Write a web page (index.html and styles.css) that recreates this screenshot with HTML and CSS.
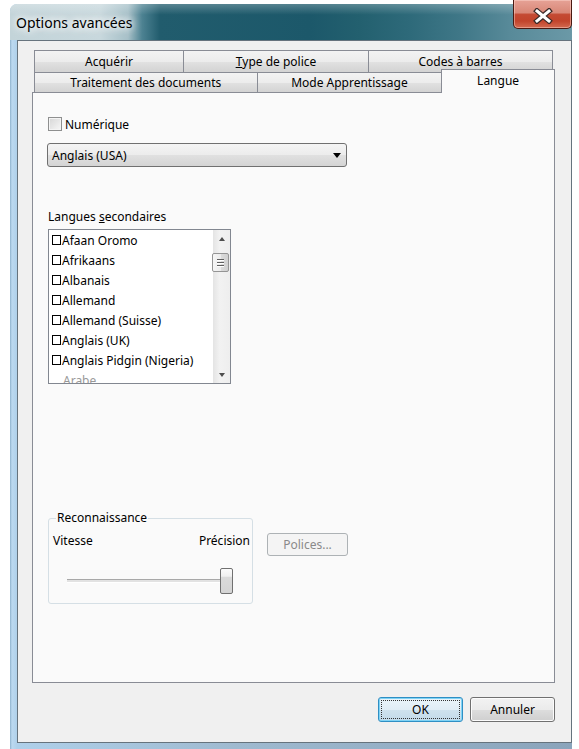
FILE: index.html
```html
<!DOCTYPE html>
<html lang="fr">
<head>
<meta charset="utf-8">
<title>Options avancées</title>
<link rel="stylesheet" href="styles.css">
</head>
<body>
<div class="window">
    <div class="titlebar">
        <span class="title">Options avancées</span>
        <div class="close-btn">
            <svg width="20" height="16" viewBox="0 0 20 16">
                <path d="M4 3 L16 13 M16 3 L4 13" stroke="#3a2a28" stroke-width="5.5" stroke-linecap="square" fill="none"/>
                <path d="M4 3 L16 13 M16 3 L4 13" stroke="#ffffff" stroke-width="3" stroke-linecap="square" fill="none"/>
            </svg>
        </div>
    </div>
    <div class="client">
        <div class="tab-control">
            <div class="tab-row tab-row-back">
                <div class="tab tab-acquerir">Acquérir</div>
                <div class="tab tab-police"><u>T</u>ype de police</div>
                <div class="tab tab-codes">Codes à barres</div>
            </div>
            <div class="tab-row tab-row-front">
                <div class="tab tab-traitement">Traitement des documents</div>
                <div class="tab tab-mode">Mode Apprentissage</div>
                <div class="tab tab-langue selected">Langue</div>
            </div>
            <div class="tab-panel">
                <div class="check-row">
                    <span class="checkbox"></span>Numérique
                </div>
                <div class="combo">
                    <span>Anglais (USA)</span>
                    <span class="combo-arrow"></span>
                </div>
                <div class="list-label">Langues <u>s</u>econdaires</div>
                <div class="listbox">
                    <ul class="list-items">
                        <li><span class="box"></span>Afaan Oromo</li>
                        <li><span class="box"></span>Afrikaans</li>
                        <li><span class="box"></span>Albanais</li>
                        <li><span class="box"></span>Allemand</li>
                        <li><span class="box"></span>Allemand (Suisse)</li>
                        <li><span class="box"></span>Anglais (UK)</li>
                        <li><span class="box"></span>Anglais Pidgin (Nigeria)</li>
                        <li class="faded">Arabe</li>
                    </ul>
                    <div class="scrollbar">
                        <div class="scroll-btn"><span class="arrow-up"></span></div>
                        <div class="scroll-track">
                            <div class="scroll-thumb">
                                <span></span><span></span><span></span>
                            </div>
                        </div>
                        <div class="scroll-btn"><span class="arrow-down"></span></div>
                    </div>
                </div>
                <div class="recognition-row">
                    <fieldset class="group">
                        <legend>Reconnaissance</legend>
                        <div class="slider-labels">
                            <span>Vitesse</span>
                            <span>Précision</span>
                        </div>
                        <div class="slider">
                            <div class="slider-track"></div>
                            <div class="slider-thumb"></div>
                        </div>
                    </fieldset>
                    <button class="btn btn-disabled" disabled>Polices...</button>
                </div>
            </div>
        </div>
        <div class="dialog-buttons">
            <button class="btn btn-default"><span class="focus">OK</span></button>
            <button class="btn">Annuler</button>
        </div>
    </div>
</div>
</body>
</html>
```

FILE: styles.css
```css
html, body {
    height: 100%;
    margin: 0;
    overflow: hidden;
    background-color: #ffffff;
    font-family: "Noto Sans", "Open Sans", sans-serif;
    font-size: 12px;
    color: #000000;
}

.window {
    margin: 4px 0 0 10px;
    width: 562px;
    padding-bottom: 12px;
    border-radius: 7px 0 0 0;
    background: linear-gradient(90deg, #8eb2cd 0, #bcd9f0 2px, #afd0ea 7px, #9fbad0 40%, #8aa4bb 100%);
}

/* title bar */

.titlebar {
    display: flex;
    align-items: flex-start;
    height: 36px;
    border-radius: 7px 0 0 0;
    background:
        linear-gradient(rgba(255, 255, 255, 0.25), rgba(255, 255, 255, 0) 30%),
        linear-gradient(90deg, #c3d4d9 0, #c8d8dd 90px, #a6c0c8 118px, #4d8292 132px, #215c6d 150px,
            #1c586a 300px, #23606f 350px, #2e6a7a 400px, #3f7787 450px, #588a99 500px, #6b99a7 562px);
}

.title {
    padding: 0 8px 0 6px;
    line-height: 38px;
    font-size: 14px;
    text-shadow: 0 0 6px #ffffff, 0 0 10px #ffffff, 0 0 14px rgba(255, 255, 255, 0.8);
}

.close-btn {
    display: flex;
    justify-content: center;
    align-items: center;
    box-sizing: border-box;
    margin: -4px 0 0 auto;
    padding-top: 3px;
    width: 59px;
    height: 29px;
    border: 1px solid #4a1a12;
    border-top: 0;
    border-radius: 0 0 5px 5px;
    background: linear-gradient(#e6a296 0, #d98878 45%, #c44a33 52%, #c2442c 75%, #d36a50 100%);
    box-shadow: inset 0 0 0 1px rgba(255, 220, 210, 0.45);
}

/* client area */

.client {
    box-sizing: border-box;
    margin-left: 7px;
    width: 555px;
    padding: 9px 16px 20px 14px;
    background-color: #f0f0f0;
    border: 1px solid #66737d;
}

.tab-row {
    display: flex;
    padding-left: 2px;
}

.tab-row-back {
    height: 22px;
}

.tab-row-front {
    height: 20px;
}

.tab {
    display: flex;
    justify-content: center;
    align-items: center;
    box-sizing: border-box;
    height: 100%;
    border: 1px solid #898c95;
    border-bottom: 0;
    background: linear-gradient(#f3f3f3 0, #ececec 50%, #e0e0e0 55%, #d3d3d3 100%);
    white-space: nowrap;
}

.tab + .tab {
    margin-left: -1px;
}

.tab-acquerir { width: 150px; }
.tab-police { width: 186px; }
.tab-codes { width: 185px; }
.tab-traitement { width: 224px; }
.tab-mode { width: 186px; }
.tab-langue { width: 114px; }

.tab.selected {
    position: relative;
    z-index: 1;
    margin-top: -3px;
    height: 24px;
    padding-bottom: 3px;
    background: #fafafa;
}

.tab-panel {
    box-sizing: border-box;
    height: 591px;
    padding: 0 15px;
    border: 1px solid #898c95;
    background-color: #fafafa;
}

.check-row {
    display: flex;
    align-items: center;
    margin-top: 24px;
    height: 14px;
}

.checkbox {
    box-sizing: border-box;
    width: 14px;
    height: 14px;
    margin-right: 3px;
    border: 1px solid #8e8f8f;
    background: linear-gradient(135deg, #d6d6d6, #f7f7f7);
    box-shadow: inset 0 0 0 1px #f4f4f4;
}

.combo {
    display: flex;
    justify-content: space-between;
    align-items: center;
    box-sizing: border-box;
    margin: 12px 0 0 -1px;
    padding: 0 5px 0 4px;
    width: 300px;
    height: 24px;
    border: 1px solid #707070;
    border-radius: 3px;
    background: linear-gradient(#f4f4f4 0, #ececec 50%, #e0e0e0 52%, #d4d4d4 100%);
}

.combo-arrow {
    width: 0;
    height: 0;
    border-left: 4px solid transparent;
    border-right: 4px solid transparent;
    border-top: 5px solid #000000;
}

.list-label {
    margin-top: 42px;
    line-height: 16px;
}

.listbox {
    display: flex;
    box-sizing: border-box;
    margin-top: 4px;
    width: 183px;
    height: 155px;
    border: 1px solid #828790;
    background-color: #ffffff;
}

.list-items {
    flex: 1;
    margin: 0;
    padding: 0;
    list-style: none;
    overflow: hidden;
}

.list-items li {
    display: flex;
    align-items: center;
    height: 20px;
    padding-left: 3px;
    white-space: nowrap;
}

.list-items .box {
    box-sizing: border-box;
    width: 9px;
    height: 10px;
    margin-right: 1px;
    border: 1px solid #000000;
}

.list-items li.faded {
    padding-left: 14px;
    color: #999999;
}

.scrollbar {
    display: flex;
    flex-direction: column;
    width: 17px;
    background: linear-gradient(90deg, #e4e4e4, #f2f2f2 40%, #eeeeee);
}

.scroll-btn {
    display: flex;
    justify-content: center;
    align-items: center;
    height: 17px;
}

.arrow-up {
    width: 0;
    height: 0;
    border-left: 3px solid transparent;
    border-right: 3px solid transparent;
    border-bottom: 4px solid #4d4d4d;
}

.arrow-down {
    width: 0;
    height: 0;
    border-left: 3px solid transparent;
    border-right: 3px solid transparent;
    border-top: 4px solid #4d4d4d;
}

.scroll-track {
    flex: 1;
}

.scroll-thumb {
    display: flex;
    flex-direction: column;
    justify-content: center;
    align-items: center;
    gap: 2px;
    box-sizing: border-box;
    margin: 6px 0 0 -1px;
    width: 17px;
    height: 19px;
    border: 1px solid #959595;
    border-radius: 2px;
    background: linear-gradient(90deg, #f6f6f6, #ececec 50%, #dcdcdc 51%, #d0d0d0);
}

.scroll-thumb span {
    width: 7px;
    height: 1px;
    background-color: #606060;
    box-shadow: 0 1px 0 #ffffff;
}

/* recognition group */

.recognition-row {
    display: flex;
    align-items: flex-start;
    margin-top: 126px;
}

.group {
    box-sizing: border-box;
    margin: 0;
    min-width: 0;
    width: 205px;
    padding: 7px 2px 9px 4px;
    border: 1px solid #d5dfe5;
    border-radius: 3px;
}

.group legend {
    margin-left: 3px;
    padding: 0 1px;
    line-height: 16px;
}

.slider-labels {
    display: flex;
    justify-content: space-between;
    line-height: 16px;
}

.slider {
    position: relative;
    margin-top: 19px;
    height: 26px;
}

.slider-track {
    position: absolute;
    left: 14px;
    top: 11px;
    width: 156px;
    height: 2px;
    border-top: 1px solid #a8a8a8;
    border-bottom: 1px solid #ffffff;
    background-color: #e2e2e2;
}

.slider-thumb {
    position: absolute;
    left: 167px;
    top: 0;
    box-sizing: border-box;
    width: 13px;
    height: 26px;
    border: 1px solid #707070;
    border-radius: 2px;
    background: linear-gradient(#fbfbfb 0, #f0f0f0 30%, #dadada 35%, #d4d4d4 100%);
}

/* buttons */

.btn {
    box-sizing: border-box;
    width: 85px;
    height: 25px;
    padding: 0;
    font-family: inherit;
    font-size: 12px;
    color: #000000;
    border: 1px solid #707070;
    border-radius: 3px;
    background: linear-gradient(#f2f2f2 0, #ebebeb 50%, #dddddd 51%, #cfcfcf 100%);
    box-shadow: inset 0 0 0 1px #fcfcfc;
}

.btn-disabled {
    margin: 23px 0 0 14px;
    width: 81px;
    height: 23px;
    color: #8a8a8a;
    border-color: #adb2b5;
    background: #f4f4f4;
    box-shadow: none;
}

.dialog-buttons {
    display: flex;
    justify-content: flex-end;
    gap: 7px;
    margin-top: 14px;
}

.btn-default {
    padding: 2px;
    border-color: #2f8fc4;
    background: linear-gradient(#eaf4fa 0, #e0edf5 50%, #cfe2ee 51%, #c3dae9 100%);
    box-shadow: inset 0 0 0 1px #7fd3f5;
}

.btn-default .focus {
    display: flex;
    justify-content: center;
    align-items: center;
    box-sizing: border-box;
    height: 100%;
    border: 1px dotted #333333;
}
```
